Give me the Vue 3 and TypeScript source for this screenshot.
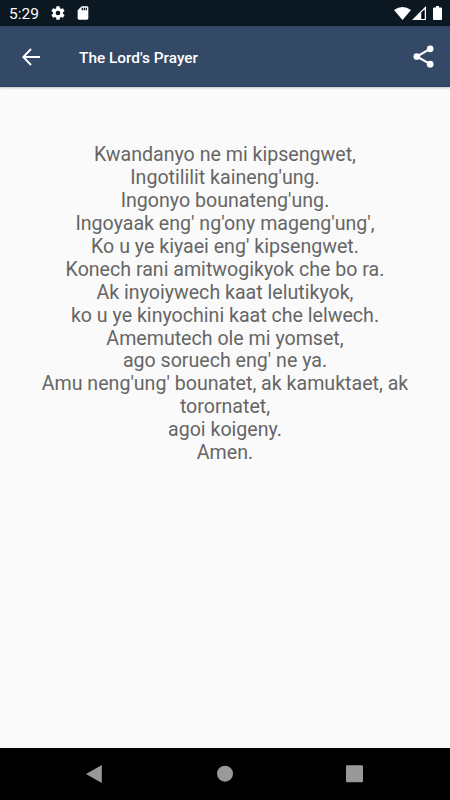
<script setup lang="ts">
const lines: string[] = [
  'Kwandanyo ne mi kipsengwet,',
  "Ingotililit kaineng'ung.",
  "Ingonyo bounateng'ung.",
  "Ingoyaak eng' ng'ony mageng'ung',",
  "Ko u ye kiyaei eng' kipsengwet.",
  'Konech rani amitwogikyok che bo ra.',
  'Ak inyoiywech kaat lelutikyok,',
  'ko u ye kinyochini kaat che lelwech.',
  'Amemutech ole mi yomset,',
  "ago soruech eng' ne ya.",
  "Amu neng'ung' bounatet, ak kamuktaet, ak torornatet,",
  'agoi koigeny.',
  'Amen.',
]
</script>

<template>
  <div class="screen">
    <div class="status">
      <span class="time">5:29</span>
      <svg class="gear" viewBox="0 0 24 24"><path fill-rule="evenodd" d="M19.4 13a7.500 7.500 0 0 0 0-2l2.100-1.650a.5.5 0 0 0 .12-.64l-2-3.460a.5.5 0 0 0-.61-.22l-2.490 1a7.300 7.300 0 0 0-1.690-.98l-.38-2.650A.49.49 0 0 0 14 2h-4a.49.49 0 0 0-.49.42l-.38 2.650c-.61.25-1.170.59-1.690.98l-2.490-1a.5.5 0 0 0-.61.22l-2 3.460a.5.5 0 0 0 .12.64L4.600 11a7.500 7.500 0 0 0 0 2l-2.110 1.650a.5.5 0 0 0-.12.64l2 3.460c.12.22.39.3.61.22l2.490-1c.52.4 1.080.73 1.690.98l.38 2.650c.03.24.24.42.49.42h4c.25 0 .46-.18.49-.42l.38-2.650c.61-.25 1.170-.59 1.690-.98l2.490 1c.23.09.49 0 .61-.22l2-3.460a.5.5 0 0 0-.12-.64zM12 15.500a3.500 3.500 0 1 1 0-7 3.500 3.500 0 0 1 0 7z" /></svg>
      <svg class="sd" viewBox="0 0 24 24"><path fill-rule="evenodd" d="M18 2h-8L4 8v12c0 1.100.9 2 2 2h12c1.100 0 2-.9 2-2V4c0-1.100-.9-2-2-2zM12 8h-2V4h2zm3 0h-2V4h2zm3 0h-2V4h2z" /></svg>
      <span class="spacer"></span>
      <svg class="wifi" viewBox="0 0 17 13"><path d="M0 3Q8.500-3 17 3L8.500 13z" /></svg>
      <svg class="signal" viewBox="0 0 14 14"><path fill-rule="evenodd" d="M0 14L14 0v14zM9.500 6.500V13h3V3.500z" /><path class="dim" d="M9.500 6.500V13h3V3.500z" /></svg>
      <svg class="battery" viewBox="0 0 9 14"><path d="M3 0h3v1.500h2q1 0 1 1V13q0 1-1 1H1q-1 0-1-1V2.500q0-1 1-1h2z" /></svg>
    </div>
    <header class="bar">
      <svg class="back" viewBox="0 0 18 18"><path d="M9 1L1.300 9 9 17M1.300 9H18" /></svg>
      <h1 class="title">The Lord's Prayer</h1>
      <svg class="share" viewBox="0 0 22 24"><path d="M18 4L4 12l14 8" /><circle cx="18" cy="4" r="3.500" /><circle cx="4" cy="12" r="3.500" /><circle cx="18" cy="20" r="3.500" /></svg>
    </header>
    <main class="content">
      <p v-for="line in lines" :key="line" class="line">{{ line }}</p>
    </main>
    <nav class="nav">
      <svg viewBox="0 0 18 20"><path d="M15.800 1v18L0 10z" /></svg>
      <svg viewBox="0 0 18 20"><circle cx="9" cy="9.700" r="8" /></svg>
      <svg viewBox="0 0 18 20"><rect x="0" y="1.300" width="17" height="17" rx="1" /></svg>
    </nav>
  </div>
</template>

<style>
body { margin: 0; }
</style>
<style scoped>
.screen { width: 450px; height: 800px; display: flex; flex-direction: column; background: #fafafa; font-family: Roboto, sans-serif; overflow: hidden; }
svg { display: block; fill: #fff; flex: none; }
.status { height: 26px; flex: none; box-sizing: border-box; background: #0b1821; display: flex; align-items: center; padding: 0 8px 0 9px; color: #fff; }
.time { font-size: 15.500px; width: 41px; padding-top: 2px; }
.gear { width: 16px; height: 16px; }
.sd { width: 16px; height: 16px; margin-left: 9px; }
.spacer { flex: 1; }
.wifi { width: 17px; height: 13px; }
.signal { width: 14px; height: 14px; margin-left: 1px; }
.dim { fill: #02070b; }
.battery { width: 9px; height: 14px; margin-left: 7px; }
.bar { height: 61px; flex: none; box-sizing: border-box; background: #344966; border-bottom: 1px solid #25436b; display: flex; align-items: center; padding: 1px 16px 0 22px; box-shadow: 0 1px 2px rgba(0,0,0,.22); }
.back { width: 18px; height: 18px; fill: none; stroke: #fff; stroke-width: 1.900; }
.title { margin: 2px 0 0 39px; flex: 1; font-size: 15.400px; font-weight: 500; color: #fff; }
.share { width: 21px; height: 23px; }
.share path { fill: none; stroke: #fff; stroke-width: 2.200; }
.content { flex: 1; padding: 57px 40px 0; text-align: center; color: #666; font-size: 19.600px; line-height: 22.940px; }
.line { margin: 0; }
.nav { height: 52px; flex: none; background: #000; display: flex; align-items: center; justify-content: center; gap: 112px; }
.nav svg { width: 18px; height: 20px; fill: #999; }
</style>
